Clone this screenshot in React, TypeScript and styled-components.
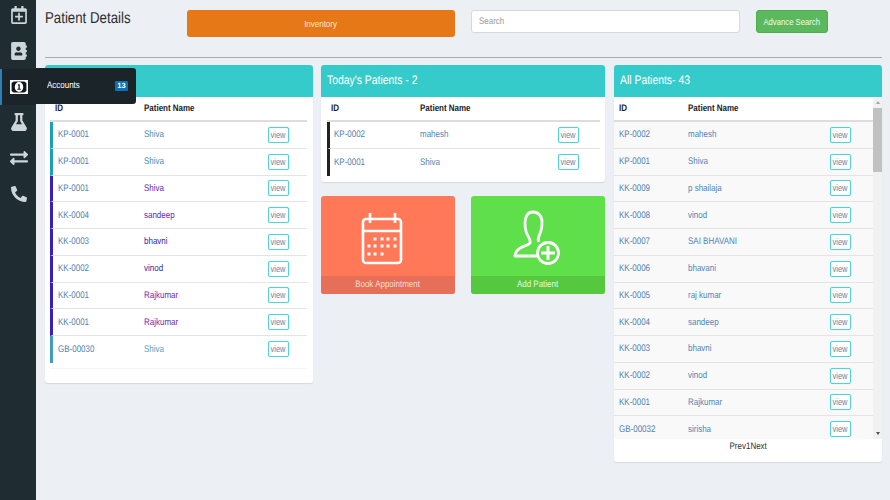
import styled, { createGlobalStyle, css } from "styled-components";
import {
  FaRegCalendarPlus,
  FaAddressBook,
  FaFlask,
  FaExchangeAlt,
  FaPhone,
} from "react-icons/fa";

const Global = createGlobalStyle`
  html, body {
    margin: 0;
    padding: 0;
    height: 500px;
    overflow: hidden;
    background: #eceff4;
    font-family: "Liberation Sans", Arial, sans-serif;
    text-rendering: geometricPrecision;
  }
  * { box-sizing: border-box; }
`;

// the text in the shot is narrower than it is tall
const squeeze = css`
  display: inline-block;
  transform: scaleX(0.84);
  transform-origin: left center;
`;

const Label = styled.span`
  display: inline-block;
  transform: scaleX(0.84);
  transform-origin: center;
  white-space: nowrap;
`;

const Page = styled.div`
  display: flex;
  width: 890px;
  height: 500px;
`;

const Sidebar = styled.nav`
  width: 36px;
  flex: none;
  background: #1f2d33;
  display: flex;
  flex-direction: column;
`;

const NavList = styled.div`
  margin-top: -2.5px;
`;

const NavItem = styled.div<{ $active?: boolean }>`
  position: relative;
  height: 35.7px;
  display: flex;
  align-items: center;
  justify-content: center;
  color: #ccd5d9;
  font-size: 18px;
  background: ${(p) => (p.$active ? "#1b2428" : "transparent")};
  border-left: 2px solid ${(p) => (p.$active ? "#2f7fb5" : "transparent")};
`;

const NavPopout = styled.div`
  position: absolute;
  left: 34px;
  top: -1px;
  width: 100px;
  height: 36px;
  background: #1b2428;
  border-radius: 0 3px 3px 0;
  display: flex;
  align-items: center;
  justify-content: space-between;
  padding: 0 8px 0 11px;
  color: #fff;
  font-size: 9.5px;
  z-index: 5;
`;

const NavText = styled.span`
  ${squeeze}
`;

const Badge = styled.span`
  width: 13px;
  height: 10px;
  background: #0a72b5;
  color: #fff;
  font-size: 7.5px;
  font-weight: bold;
  text-align: center;
  border-radius: 1px;
  line-height: 10px;
`;

const Main = styled.main`
  flex: 1;
  padding: 10px 8px 0 9px;
  min-width: 0;
`;

const TopBar = styled.div`
  display: flex;
  align-items: flex-start;
  height: 48px;
  border-bottom: 1px solid #a9abad;
`;

const Title = styled.h1`
  margin: 0;
  flex: none;
  font-size: 15.8px;
  font-weight: normal;
  line-height: 18px;
  color: #2c2f33;
  ${squeeze}
  width: 142px;
`;

const InventoryButton = styled.button`
  width: 268px;
  height: 27px;
  margin-right: 16px;
  flex: none;
  background: #e67817;
  color: #fbe4d2;
  border: none;
  border-radius: 3px;
  font: 9.5px "Liberation Sans", Arial, sans-serif;
`;

const SearchBox = styled.div`
  width: 269px;
  height: 23px;
  margin-right: 16px;
  flex: none;
  padding: 0 7px;
  background: #fff;
  border: 1px solid #d6d8da;
  border-radius: 3px;
  color: #999;
  font-size: 9.5px;
  line-height: 21px;
`;

const Placeholder = styled.span`
  ${squeeze}
`;

const AdvanceButton = styled.button`
  width: 72px;
  height: 23px;
  flex: none;
  background: #5cb85c;
  color: #f2fbf2;
  border: 1px solid #4cae4c;
  border-radius: 3px;
  font: 9.2px "Liberation Sans", Arial, sans-serif;
  padding: 0;
`;

const Columns = styled.div`
  display: grid;
  grid-template-columns: 268px 284px 269px;
  column-gap: 8px;
  margin-top: 7px;
  align-items: start;
`;

const Stack = styled.div`
  display: flex;
  flex-direction: column;
  gap: 14px;
`;

const Panel = styled.section<{ $height: number }>`
  background: #fff;
  border-radius: 3px;
  box-shadow: 0 1px 1px #d5d8dc;
  height: ${(p) => p.$height}px;
`;

const AllPanel = styled(Panel)`
  margin-left: 1px;
`;

const PanelHead = styled.h2`
  margin: 0;
  height: 31.5px;
  background: #36cbcb;
  border-radius: 3px 3px 0 0;
  color: #fff;
  font-size: 12.4px;
  font-weight: normal;
  line-height: 31.5px;
  padding-left: 6px;
`;

const PanelTitle = styled.span`
  ${squeeze}
`;

const Table = styled.div<{ $left: number; $right: number }>`
  padding: 0 ${(p) => p.$right}px 0 ${(p) => p.$left}px;
`;

const TableTail = styled.div`
  height: 6px;
  border-bottom: 1px solid #f6f6f6;
`;

const HeadRow = styled.div<{ $idWidth: number; $pad: number }>`
  display: grid;
  grid-template-columns: ${(p) => p.$idWidth}px 1fr;
  height: 25.5px;
  padding-bottom: 0.5px;
  align-items: center;
  padding-left: ${(p) => p.$pad}px;
  border-bottom: 2px solid #dddddd;
  color: #1c1c1c;
  font-size: 9.5px;
  font-weight: bold;
`;

const HeadCell = styled.span`
  ${squeeze}
`;

const Row = styled.div<{
  $strip?: string;
  $idWidth: number;
  $pad: number;
  $viewGap: number;
  $striped?: boolean;
}>`
  display: grid;
  grid-template-columns: ${(p) => p.$idWidth}px 1fr auto;
  height: 26.75px;
  align-items: center;
  padding-left: ${(p) => p.$pad}px;
  padding-right: ${(p) => p.$viewGap}px;
  border-left: ${(p) => (p.$strip ? `3px solid ${p.$strip}` : "none")};
  border-bottom: 1px solid #e4e4e4;
  background: ${(p) => (p.$striped ? "#f9f9f9" : "#fff")};
  font-size: 9.5px;
  &:last-child {
    border-bottom: ${(p) => (p.$strip ? "none" : "1px solid #e4e4e4")};
  }
`;

const IdCell = styled.span`
  ${squeeze}
  color: #4f7fb0;
`;

const NameCell = styled.span<{ $color: string }>`
  ${squeeze}
  color: ${(p) => p.$color};
`;

const ViewButton = styled.button`
  width: 21px;
  height: 16px;
  padding: 0;
  background: #fff;
  border: 1px solid #4fd3d6;
  border-radius: 2px;
  box-shadow: 0 0 1px #8fe6e8;
  color: #6c86a0;
  font: 9px "Liberation Sans", Arial, sans-serif;
`;

const ScrollArea = styled.div`
  display: flex;
  height: 342px;
  overflow: hidden;
`;

const ScrollBody = styled.div`
  flex: 1;
  min-width: 0;
`;

const ScrollTrack = styled.div`
  width: 9px;
  flex: none;
  background: #f1f1f1;
  display: flex;
  flex-direction: column;
  align-items: center;
  justify-content: space-between;
  position: relative;
`;

const ScrollThumb = styled.div`
  position: absolute;
  left: 0;
  top: 11px;
  width: 9px;
  height: 64px;
  background: #c1c1c1;
`;

const ScrollArrow = styled.span<{ $down?: boolean }>`
  width: 0;
  height: 0;
  margin: 4px 0;
  border-left: 2.5px solid transparent;
  border-right: 2.5px solid transparent;
  ${(p) =>
    p.$down
      ? "border-top: 3px solid #505050;"
      : "border-bottom: 3px solid #a3a3a3;"}
`;

const Pager = styled.div`
  height: 24px;
  padding-top: 2px;
  text-align: center;
  color: #333;
  font-size: 9.5px;
  line-height: 11px;
`;

const Tiles = styled.div`
  display: grid;
  grid-template-columns: 134px 134px;
  column-gap: 16px;
`;

const Tile = styled.div<{ $color: string }>`
  height: 98px;
  border-radius: 3px;
  overflow: hidden;
  background: ${(p) => p.$color};
  display: flex;
  flex-direction: column;
`;

const TileIcon = styled.div<{ $nudge: number }>`
  flex: 1;
  display: flex;
  align-items: center;
  justify-content: center;
  padding-top: 4px;
  padding-right: ${(p) => p.$nudge}px;
`;

const TileBar = styled.div<{ $bar: string; $ink: string }>`
  height: 18px;
  background: ${(p) => p.$bar};
  color: ${(p) => p.$ink};
  font-size: 9.5px;
  line-height: 18px;
  text-align: center;
`;

type Patient = { id: string; name: string; strip?: string; color?: string };

const TEAL = "#1e9fb8";
const INDIGO = "#3a1fb8";
const LINK = "#4f86b5";
const PURPLE = "#5b2bb5";

const pending: Patient[] = [
  { id: "KP-0001", name: "Shiva", strip: TEAL, color: "#3f8fb5" },
  { id: "KP-0001", name: "Shiva", strip: TEAL, color: "#3f8fb5" },
  { id: "KP-0001", name: "Shiva", strip: INDIGO, color: PURPLE },
  { id: "KK-0004", name: "sandeep", strip: INDIGO, color: PURPLE },
  { id: "KK-0003", name: "bhavni", strip: INDIGO, color: "#3a1fa0" },
  { id: "KK-0002", name: "vinod", strip: INDIGO, color: "#3a1fa0" },
  { id: "KK-0001", name: "Rajkumar", strip: INDIGO, color: "#6a2bb0" },
  { id: "KK-0001", name: "Rajkumar", strip: INDIGO, color: "#6a2bb0" },
  { id: "GB-00030", name: "Shiva", strip: "#3f9fb8", color: "#5a9fb8" },
];

const today: Patient[] = [
  { id: "KP-0002", name: "mahesh", strip: "#222" },
  { id: "KP-0001", name: "Shiva", strip: "#222" },
];

const all: Patient[] = [
  { id: "KP-0002", name: "mahesh" },
  { id: "KP-0001", name: "Shiva" },
  { id: "KK-0009", name: "p shailaja" },
  { id: "KK-0008", name: "vinod" },
  { id: "KK-0007", name: "SAI BHAVANI" },
  { id: "KK-0006", name: "bhavani" },
  { id: "KK-0005", name: "raj kumar" },
  { id: "KK-0004", name: "sandeep" },
  { id: "KK-0003", name: "bhavni" },
  { id: "KK-0002", name: "vinod" },
  { id: "KK-0001", name: "Rajkumar" },
  { id: "GB-00032", name: "sirisha" },
];

const MoneyIcon = () => (
  <svg width="18" height="14" viewBox="0 0 17 14" preserveAspectRatio="none">
    <rect width="17" height="14" fill="#fff" />
    <path d="M1.5 3 3.5 1.5h10L15.5 3v8l-2 1.5h-10L1.5 11z" fill="#11181b" />
    <ellipse cx="8.5" cy="7" rx="4" ry="5" fill="#fff" />
    <path d="M7.5 4.2h1.700v4.600h1v1H7v-1h1V5.400h-.5z" fill="#11181b" />
  </svg>
);

const calendarDots = [
  [14, 27], [21, 27], [27, 27], [34, 27],
  [8, 34], [14, 34], [21, 34], [27, 34], [34, 34],
  [8, 42], [14, 42], [21, 42],
];

const CalendarIcon = () => (
  <svg width="42" height="53" viewBox="0 0 42 53" fill="none" stroke="#fff">
    <rect x="2" y="7" width="38" height="44" rx="3" strokeWidth="2.6" />
    <path d="M2 19h38" strokeWidth="2.6" />
    <path d="M9 1v10M34 1v10" strokeWidth="2.6" />
    <g fill="#fff" stroke="none">
      {calendarDots.map(([x, y]) => (
        <rect key={`${x}-${y}`} x={x - 1.5} y={y - 1.5} width="3" height="3" />
      ))}
    </g>
  </svg>
);

const AddUserIcon = () => (
  <svg width="48" height="56" viewBox="0 0 48 56" fill="none" stroke="#fff" strokeWidth="2.8">
    <path
      d="M24 46H2c0-5 3-7 7-9 4-1.500 7-2.500 8-4 .5-2 0-4-2-7-2-3-3-7-3-13C12 6 15 2 20 2s9 4 9 10c0 5-1 10-3 14-.8 2-1 4-.5 6"
      strokeLinejoin="round"
    />
    <circle cx="35" cy="43" r="10.5" />
    <path d="M35 36v14M28 43h14" strokeWidth="3" />
  </svg>
);

const PatientRows = ({
  rows,
  pad,
  viewGap,
  idWidth,
  striped,
}: {
  rows: Patient[];
  pad: number;
  viewGap: number;
  idWidth: number;
  striped?: boolean;
}) => (
  <>
    {rows.map((r, i) => (
      <Row
        key={i}
        $strip={r.strip}
        $idWidth={idWidth}
        $pad={pad}
        $viewGap={viewGap}
        $striped={striped}
      >
        <IdCell>{r.id}</IdCell>
        <NameCell $color={r.color || LINK}>{r.name}</NameCell>
        <ViewButton>
          <Label>view</Label>
        </ViewButton>
      </Row>
    ))}
  </>
);

const TableHead = ({ idWidth, pad }: { idWidth: number; pad: number }) => (
  <HeadRow $idWidth={idWidth} $pad={pad}>
    <HeadCell>ID</HeadCell>
    <HeadCell>Patient Name</HeadCell>
  </HeadRow>
);

export default function App() {
  return (
    <Page>
      <Global />
      <Sidebar>
        <NavList>
          <NavItem><FaRegCalendarPlus /></NavItem>
          <NavItem><FaAddressBook /></NavItem>
          <NavItem $active>
            <MoneyIcon />
            <NavPopout>
              <NavText>Accounts</NavText>
              <Badge>13</Badge>
            </NavPopout>
          </NavItem>
          <NavItem><FaFlask /></NavItem>
          <NavItem><FaExchangeAlt /></NavItem>
          <NavItem><FaPhone size={16} style={{ transform: "scaleX(-1)" }} /></NavItem>
        </NavList>
      </Sidebar>
      <Main>
        <TopBar>
          <Title>Patient Details</Title>
          <InventoryButton><Label>Inventory</Label></InventoryButton>
          <SearchBox><Placeholder>Search</Placeholder></SearchBox>
          <AdvanceButton><Label>Advance Search</Label></AdvanceButton>
        </TopBar>
        <Columns>
          <Panel $height={318}>
            <PanelHead />
            <Table $left={5} $right={6}>
              <TableHead idWidth={89} pad={5} />
              <div>
                <PatientRows rows={pending} pad={5} idWidth={86} viewGap={18} />
              </div>
              <TableTail />
            </Table>
          </Panel>
          <Stack>
            <Panel $height={117}>
              <PanelHead><PanelTitle>Today's Patients - 2</PanelTitle></PanelHead>
              <Table $left={6} $right={5}>
                <TableHead idWidth={89} pad={4} />
                <div>
                  <PatientRows rows={today} pad={4} idWidth={86} viewGap={21} />
                </div>
              </Table>
            </Panel>
            <Tiles>
              <Tile $color="#ff7958">
                <TileIcon $nudge={12}><CalendarIcon /></TileIcon>
                <TileBar $bar="#e56f58" $ink="#f8dcd2"><Label>Book Appointment</Label></TileBar>
              </Tile>
              <Tile $color="#5fe04a">
                <TileIcon $nudge={3}><AddUserIcon /></TileIcon>
                <TileBar $bar="#55c840" $ink="#e6f8e0"><Label>Add Patient</Label></TileBar>
              </Tile>
            </Tiles>
          </Stack>
          <AllPanel $height={397}>
            <PanelHead><PanelTitle>All Patients- 43</PanelTitle></PanelHead>
            <ScrollArea>
              <ScrollBody>
                <TableHead idWidth={69} pad={5} />
                <PatientRows rows={all} pad={5} idWidth={69} viewGap={22} striped />
              </ScrollBody>
              <ScrollTrack>
                <ScrollArrow />
                <ScrollThumb />
                <ScrollArrow $down />
              </ScrollTrack>
            </ScrollArea>
            <Pager><Label>Prev1Next</Label></Pager>
          </AllPanel>
        </Columns>
      </Main>
    </Page>
  );
}
